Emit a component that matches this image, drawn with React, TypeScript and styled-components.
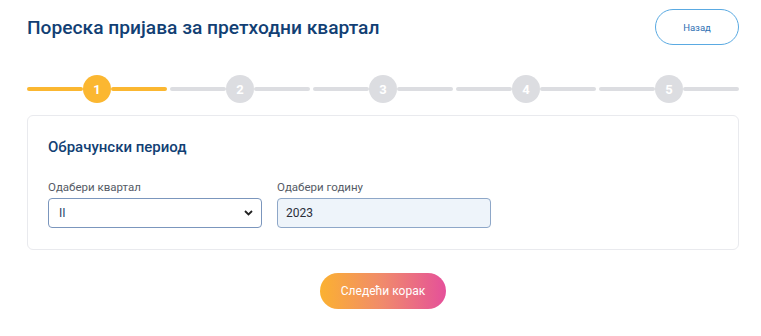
import styled, { createGlobalStyle } from "styled-components";

const GlobalStyle = createGlobalStyle`
  body {
    margin: 0;
    background: #ffffff;
    font-family: Roboto, "Noto Sans", sans-serif;
  }
`;

const Page = styled.div`
  padding: 9px 22px 0 27px;
`;

const Header = styled.div`
  display: flex;
  align-items: center;
  justify-content: space-between;
  height: 36px;
`;

const Title = styled.h1`
  margin: 0;
  font-size: 19.2px;
  font-weight: 500;
  color: #123f74;
`;

const BackButton = styled.button`
  width: 84px;
  height: 36px;
  border: 1px solid #5aaae2;
  border-radius: 18px;
  background: #fff;
  color: #2d6fb2;
  font-family: Roboto, sans-serif;
  font-size: 9.5px;
  cursor: pointer;
`;

const Stepper = styled.div`
  display: flex;
  gap: 3px;
  margin-top: 30px;
`;

const Segment = styled.div`
  flex: 1;
  display: flex;
  align-items: center;
`;

const Line = styled.div<{ $active: boolean }>`
  flex: 1;
  height: 4px;
  border-radius: 2px;
  background: ${(p) => (p.$active ? "#fbb731" : "#dcdde1")};
`;

const Circle = styled.div<{ $active: boolean }>`
  width: 28px;
  height: 28px;
  border-radius: 50%;
  display: flex;
  align-items: center;
  justify-content: center;
  background: ${(p) => (p.$active ? "#fbb731" : "#dcdde1")};
  color: #fff;
  font-size: 13px;
  font-weight: 700;
`;

const Card = styled.div`
  margin-top: 12px;
  border: 1px solid #e9eaee;
  border-radius: 6px;
  padding: 22px 20px 21px 20px;
`;

const CardTitle = styled.h2`
  margin: 0;
  font-size: 15px;
  font-weight: 500;
  color: #123f74;
  line-height: 18px;
`;

const Fields = styled.div`
  display: flex;
  gap: 15px;
  margin-top: 25px;
`;

const Field = styled.div`
  width: 214px;
  display: flex;
  flex-direction: column;
`;

const Label = styled.label`
  font-size: 11.5px;
  color: #555b66;
  line-height: 13px;
  margin-bottom: 4px;
`;

const SelectWrap = styled.div`
  position: relative;
`;

const Select = styled.select`
  width: 100%;
  height: 30px;
  appearance: none;
  border: 1px solid #7b96bd;
  border-radius: 4px;
  background: #fff;
  padding: 0 10px;
  font-family: Roboto, sans-serif;
  font-size: 12px;
  color: #2a3f6b;
`;

const Chevron = styled.svg`
  position: absolute;
  right: 9px;
  top: 12px;
  pointer-events: none;
`;

const Input = styled.input`
  box-sizing: border-box;
  width: 100%;
  height: 30px;
  border: 1px solid #8ea7c8;
  border-radius: 4px;
  background: #eef4fa;
  padding: 0 8px;
  font-family: Roboto, sans-serif;
  font-size: 12px;
  color: #2a2f3a;
`;

const Footer = styled.div`
  display: flex;
  justify-content: center;
  margin-top: 23px;
`;

const NextButton = styled.button`
  width: 126px;
  height: 36px;
  border: none;
  border-radius: 18px;
  background: linear-gradient(90deg, #fbb131 0%, #f08a6c 50%, #e5509a 100%);
  color: #fff;
  font-family: Roboto, sans-serif;
  font-size: 12px;
  cursor: pointer;
`;

const steps = [1, 2, 3, 4, 5];

export default function App() {
  return (
    <>
      <GlobalStyle />
      <Page>
        <Header>
          <Title>Пореска пријава за претходни квартал</Title>
          <BackButton type="button">Назад</BackButton>
        </Header>
        <Stepper>
          {steps.map((s) => (
            <Segment key={s}>
              <Line $active={s === 1} />
              <Circle $active={s === 1}>{s}</Circle>
              <Line $active={s === 1} />
            </Segment>
          ))}
        </Stepper>
        <Card>
          <CardTitle>Обрачунски период</CardTitle>
          <Fields>
            <Field>
              <Label>Одабери квартал</Label>
              <SelectWrap>
                <Select defaultValue="II">
                  <option value="I">I</option>
                  <option value="II">II</option>
                  <option value="III">III</option>
                  <option value="IV">IV</option>
                </Select>
                <Chevron width="9" height="6" viewBox="0 0 9 6">
                  <path d="M1 1l3.5 3.5L8 1" fill="none" stroke="#222" strokeWidth="1.8" />
                </Chevron>
              </SelectWrap>
            </Field>
            <Field>
              <Label>Одабери годину</Label>
              <Input defaultValue="2023" readOnly />
            </Field>
          </Fields>
        </Card>
        <Footer>
          <NextButton type="button">Следећи корак</NextButton>
        </Footer>
      </Page>
    </>
  );
}
